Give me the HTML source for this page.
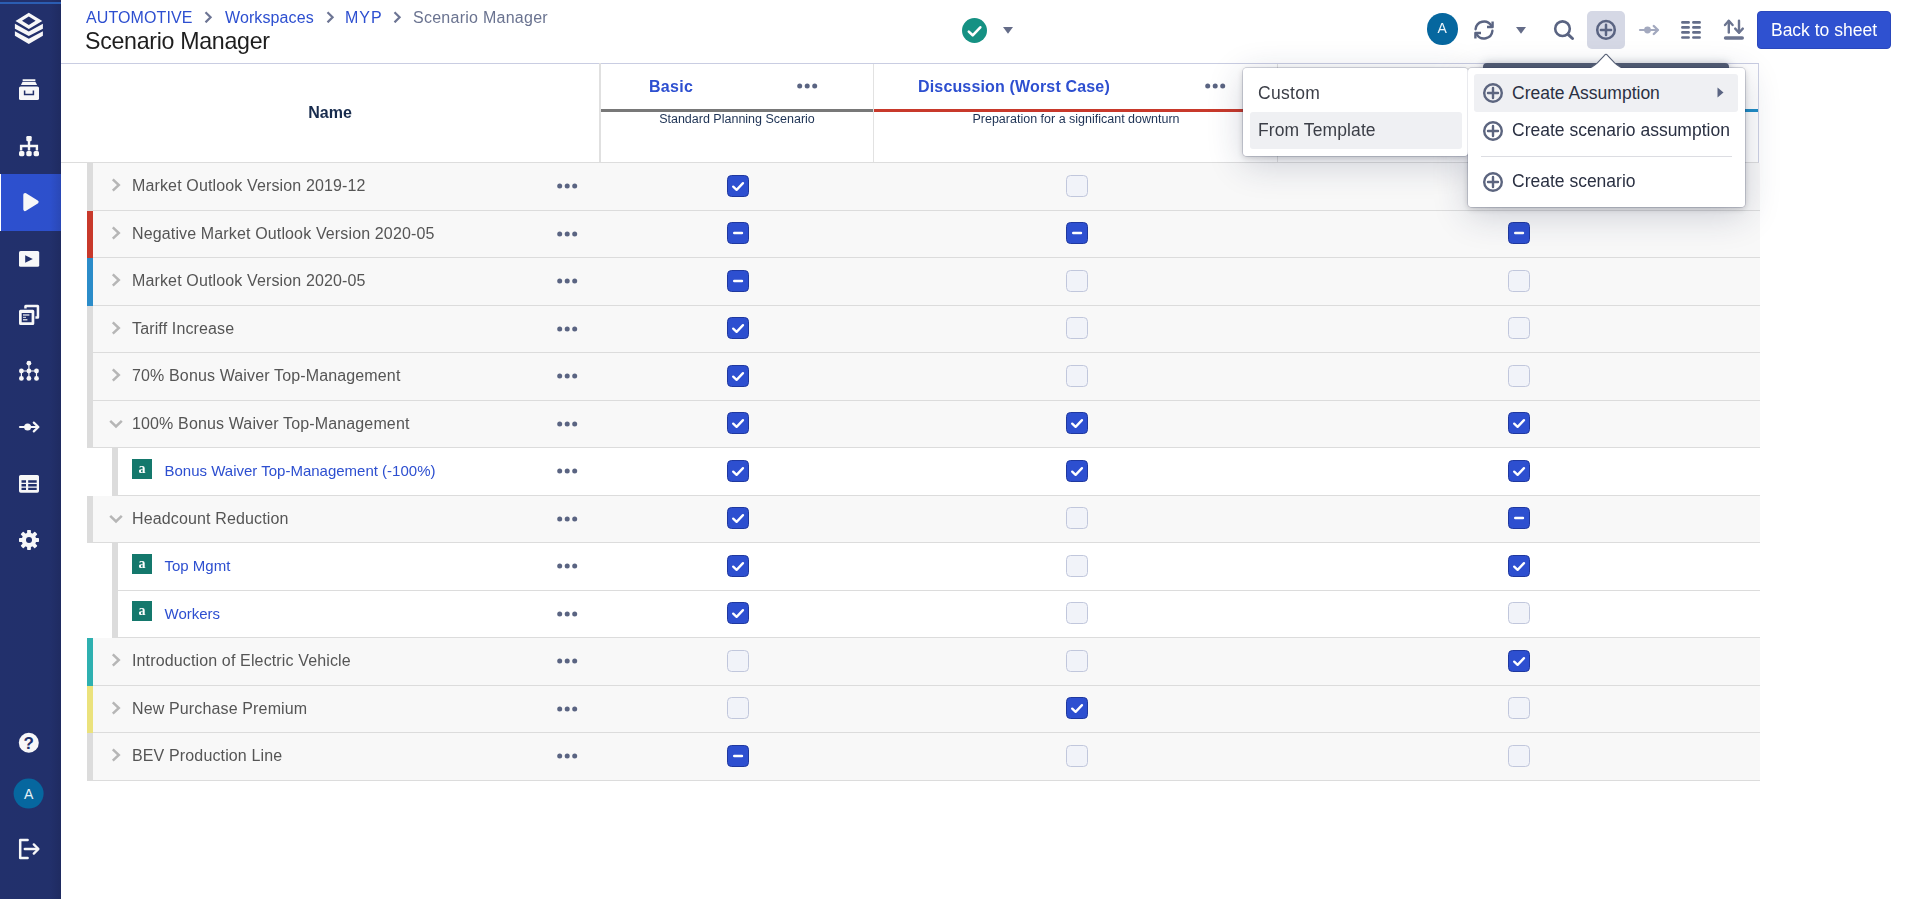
<!DOCTYPE html>
<html lang="en"><head><meta charset="utf-8"><title>Scenario Manager</title>
<style>
*{box-sizing:border-box;margin:0;padding:0}
html,body{width:1918px;height:899px;overflow:hidden;background:#fff}
body{font-family:"Liberation Sans",Arial,sans-serif;color:#333;position:relative}
.abs{position:absolute}
/* sidebar */
#side{position:absolute;left:0;top:0;width:61px;height:899px;background:linear-gradient(90deg,#22306c 0%,#22306b 82%,#1f2b61 100%)}
#side .topline{position:absolute;left:0;top:2px;width:61px;height:2px;background:#2b5db2}
#side .active{position:absolute;left:0;top:174px;width:61px;height:57px;background:linear-gradient(90deg,#2d50cf 0%,#2d50cc 82%,#2a48b6 100%);border-left:1px solid #fff}
#side svg{position:absolute;overflow:visible}
/* header */
#hdr{position:absolute;left:61px;top:0;width:1857px;height:64px;background:#fff}
#hline{position:absolute;left:61px;top:63px;width:1698px;height:1px;background:#c9cde2}
.bc{position:absolute;top:9px;font-size:16px;line-height:18px;white-space:nowrap;color:#2d4fd0}
.ttl{position:absolute;left:84.500px;top:27.500px;font-size:23.200px;letter-spacing:-0.300px;line-height:26px;color:#1e1e1e;white-space:nowrap}
/* table header */
#thead{position:absolute;left:61px;top:64px;width:1698px;height:99px;background:#fff;border-right:1px solid #cdd1e4;border-bottom:1px solid #ddd}
.vsep{position:absolute;top:64px;width:1px;height:98px;background:#e2e2e2}
.th-name{position:absolute;left:61px;width:538px;top:104px;text-align:center;font-weight:bold;font-size:16px;line-height:18px;color:#172b4d}
.sc-t{position:absolute;top:78px;font-weight:bold;font-size:16px;line-height:18px;color:#2d4fd0;white-space:nowrap}
.sc-s{position:absolute;top:112px;font-size:12.500px;line-height:14px;color:#1d3254;text-align:center;white-space:nowrap}
.ul{position:absolute;top:109px;height:3px}
svg.dots{fill:#5a6482}
/* rows */
.row{position:absolute;left:0;width:1760px}
.row .bar{position:absolute;top:0;bottom:0;width:6px}
.row .bg{position:absolute;top:0;bottom:0;right:0;border-bottom:1px solid #dcdcdc}
.gs,.bc,.ttl,.th-name,.sc-t,.sc-s,.mi.sub,.btn,.av{will-change:transform}
.row.par .bar{left:87px}
.row.par .bg{left:93px;background:#f8f8f8}
.row.kid .bar{left:112px;background:#dcdcdc}
.row.kid .bg{left:118px;background:#fff}
.row .chv{position:absolute;left:111px;top:15px;width:10px;height:14px}
.row .chx{position:absolute;left:109px;top:17.500px;width:14px;height:10px}
.row .nm{position:absolute;left:132px;top:13px;font-size:16px;line-height:20px;color:#555;white-space:nowrap;letter-spacing:.14px}
.row .ai{position:absolute;left:132px;top:11px;width:20px;height:20px;background:#14786c;color:#fff;font-family:"Liberation Serif",serif;font-weight:bold;font-size:14px;line-height:19px;text-align:center}
.row .lk{position:absolute;left:164.500px;top:12.500px;font-size:15px;line-height:20px;color:#2d4fd0;white-space:nowrap}
.row .dots{position:absolute;left:556.800px;top:20px;width:21px;height:6px}
.cb{position:absolute;top:12px;width:22px;height:22px;border-radius:4.500px;background:#f1f3f9;border:1px solid #c1c7dc}
.cb.on{background:#2d4fd0;border-color:#1f389f}
.cb svg{position:absolute;left:-1px;top:-1px;width:22px;height:22px}
/* menus */
.menu{position:absolute;background:#fff;border-radius:4px;box-shadow:0 0 0 1px rgba(40,50,90,.08),0 2px 6px rgba(0,0,0,.18),0 8px 36px rgba(30,40,80,.20)}
.menub{position:absolute;background:#fff;border-radius:4px;box-shadow:0 0 0 1px rgba(40,50,90,.10)}
.mi{position:absolute;font-size:17.5px;line-height:22px;color:#2a3042;white-space:nowrap}
.hl{position:absolute;background:#eff0f3;border-radius:3px}
</style></head><body>
<div id="hdr"></div>
<div id="hline"></div>
<a class="bc" style="left:86px;letter-spacing:.1px">AUTOMOTIVE</a><svg class="abs" style="left:204.3px;top:10.800px" width="9" height="12.600" viewBox="0 0 9 12.600"><path d="M1.500 1.200l5.100 5.100-5.100 5.100" fill="none" stroke="#6d7594" stroke-width="2.200"/></svg><a class="bc" style="left:225.300px;letter-spacing:.1px">Workspaces</a><svg class="abs" style="left:326px;top:10.800px" width="9" height="12.600" viewBox="0 0 9 12.600"><path d="M1.500 1.200l5.100 5.100-5.100 5.100" fill="none" stroke="#6d7594" stroke-width="2.200"/></svg><a class="bc" style="left:345px;letter-spacing:1px">MYP</a><svg class="abs" style="left:392.8px;top:10.800px" width="9" height="12.600" viewBox="0 0 9 12.600"><path d="M1.500 1.200l5.100 5.100-5.100 5.100" fill="none" stroke="#6d7594" stroke-width="2.200"/></svg><span class="bc" style="left:412.700px;letter-spacing:.26px;color:#6a7390">Scenario Manager</span>
<div class="ttl">Scenario Manager</div>

<!-- status -->
<svg class="abs" style="left:962px;top:17.500px" width="25" height="25" viewBox="0 0 25 25"><circle cx="12.5" cy="12.5" r="12.5" fill="#159183"/><path d="M6.800 13.600l3.900 3.700 7.600-8" fill="none" stroke="#fff" stroke-width="2.600" stroke-linecap="round" stroke-linejoin="round"/></svg>
<svg class="abs" style="left:1003px;top:27px" width="10" height="7" viewBox="0 0 10 7"><path d="M0 0h10L5 6.800z" fill="#646c88"/></svg>

<!-- toolbar -->
<div class="abs av" style="left:1427px;top:13px;width:30.500px;height:31.500px;border-radius:50%;background:#06679f;color:#eef5fa;font-size:14px;line-height:31.500px;text-align:center">A</div>
<svg class="abs" style="left:1474px;top:20px" width="20" height="20" viewBox="0 0 20 20" fill="none" stroke="#5a6482" stroke-width="2.400" stroke-linecap="round" stroke-linejoin="round"><path d="M1.600 9.200A8.500 8.500 0 0 1 17.300 5.600"/><path d="M18.600 1.400v5.600h-5.600" stroke-linecap="butt"/><path d="M18.400 10.800A8.500 8.500 0 0 1 2.700 14.400"/><path d="M1.400 18.600v-5.600h5.600" stroke-linecap="butt"/></svg>
<svg class="abs" style="left:1516px;top:27px" width="10" height="7" viewBox="0 0 10 7"><path d="M0 0h10L5 6.800z" fill="#646c88"/></svg>
<svg class="abs" style="left:1553px;top:19px" width="22" height="22" viewBox="0 0 22 22" fill="none" stroke="#5a6482" stroke-linecap="round"><circle cx="9.500" cy="9.700" r="7.300" stroke-width="2.600"/><path d="M15 15.300l4.500 4.200" stroke-width="3"/></svg>
<div class="abs" style="left:1587px;top:11px;width:38px;height:38px;border-radius:5px;background:#d5d8e5"></div>
<svg class="abs" style="left:1595px;top:19px" width="22" height="22" viewBox="0 0 22 22" fill="none" stroke="#5a6482" stroke-width="2.500"><circle cx="11" cy="10.900" r="8.800"/><path d="M11 5.800v10.200M5.900 10.900h10.200" stroke-linecap="round"/></svg>
<svg class="abs" style="left:1638px;top:24px" width="22" height="12" viewBox="0 0 22 12" fill="none" stroke="#a3a9bf" stroke-width="2.200" stroke-linecap="round" stroke-linejoin="round"><path d="M2 6h17.500"/><path d="M15.800 2L19.900 6l-4.100 4" stroke-width="2.400"/><circle cx="9.500" cy="6" r="3.400" fill="#a3a9bf" stroke="none"/></svg>
<svg class="abs" style="left:1680px;top:20px" width="22" height="20" viewBox="0 0 22 20" fill="none" stroke="#646e8a" stroke-width="2.700" stroke-linecap="round"><path d="M2.400 2.400h6.200M2.400 7.400h6.200M2.400 12.400h6.200M2.400 17.500h6.200M13.400 2.400h6.200M13.400 7.400h6.200M13.400 12.400h6.200M13.400 17.500h6.200"/></svg>
<svg class="abs" style="left:1722px;top:18px" width="24" height="24" viewBox="0 0 24 24" fill="none" stroke="#6b7490" stroke-width="2.400" stroke-linecap="round" stroke-linejoin="round"><path d="M6.800 14.600V3"/><path d="M3 7l3.800-4.200L10.600 7"/><path d="M17 2.800v11.800"/><path d="M13.200 10.600l3.800 4.200 3.800-4.200"/><path d="M3.600 20h16.600" stroke-width="3.600"/></svg>
<div class="abs btn" style="left:1757px;top:11px;width:134px;height:38px;border-radius:4px;background:#2f51d0;border:1px solid #2a47bd;color:#fff;font-size:17.5px;line-height:36px;text-align:center;white-space:nowrap">Back to sheet</div>

<!-- table header -->
<div id="thead"></div>
<div class="vsep" style="left:599px;width:2px;top:63px;height:99px;background:#e0e0e0"></div>
<div class="vsep" style="left:873px"></div>
<div class="vsep" style="left:1277px"></div>
<div class="th-name">Name</div>
<div class="sc-t" style="left:648.500px;letter-spacing:.3px">Basic</div>
<svg class="abs dots" style="left:796.800px;top:83px" width="21" height="6" viewBox="0 0 21 6"><circle cx="2.700" cy="3" r="2.500"/><circle cx="10.200" cy="3" r="2.500"/><circle cx="17.700" cy="3" r="2.500"/></svg>
<div class="ul" style="left:601px;width:272px;background:#787878"></div>
<div class="sc-s" style="left:600px;width:274px">Standard Planning Scenario</div>
<div class="sc-t" style="left:918px;letter-spacing:.16px">Discussion (Worst Case)</div>
<svg class="abs dots" style="left:1204.800px;top:83px" width="21" height="6" viewBox="0 0 21 6"><circle cx="2.700" cy="3" r="2.500"/><circle cx="10.200" cy="3" r="2.500"/><circle cx="17.700" cy="3" r="2.500"/></svg>
<div class="ul" style="left:874px;width:403px;background:#c8392b"></div>
<div class="sc-s" style="left:874px;width:404px">Preparation for a significant downturn</div>
<div class="sc-t" style="left:1330px">Management Case</div>
<div class="ul" style="left:1278px;width:480px;background:#1f8dc6"></div>
<div class="sc-s" style="left:1278px;width:482px">Scenario for management review</div>

<!-- rows -->
<div class="gs" style="position:absolute;left:0;top:0;width:1760px;height:0">
<div class="row par" style="top:163px;height:48px"><i class="bar" style="background:#dcdcdc"></i><i class="bg"></i><svg class="chv" viewBox="0 0 10 14"><path d="M1.800 1.400l6 5.600-6 5.600" fill="none" stroke="#b6b6b6" stroke-width="2.500"/></svg><span class="nm">Market Outlook Version 2019-12</span><svg class="dots" viewBox="0 0 21 6"><circle cx="2.7" cy="3" r="2.5"/><circle cx="10.2" cy="3" r="2.5"/><circle cx="17.7" cy="3" r="2.5"/></svg><span class="cb on" style="top:12px;left:727px"><svg viewBox="0 0 22 22"><path d="M6.200 11.600l3.400 3.300 6.400-6.800" fill="none" stroke="#fff" stroke-width="2.300" stroke-linecap="round" stroke-linejoin="round"/></svg></span><span class="cb" style="top:12px;left:1066px"></span><span class="cb" style="top:12px;left:1508px"></span></div>
<div class="row par" style="top:211px;height:47px"><i class="bar" style="background:#c8392b"></i><i class="bg"></i><svg class="chv" viewBox="0 0 10 14"><path d="M1.800 1.400l6 5.600-6 5.600" fill="none" stroke="#b6b6b6" stroke-width="2.500"/></svg><span class="nm">Negative Market Outlook Version 2020-05</span><svg class="dots" viewBox="0 0 21 6"><circle cx="2.7" cy="3" r="2.5"/><circle cx="10.2" cy="3" r="2.5"/><circle cx="17.7" cy="3" r="2.5"/></svg><span class="cb on" style="top:11px;left:727px"><svg viewBox="0 0 22 22"><path d="M7.200 11h7.800" fill="none" stroke="#fff" stroke-width="2.400" stroke-linecap="round"/></svg></span><span class="cb on" style="top:11px;left:1066px"><svg viewBox="0 0 22 22"><path d="M7.200 11h7.800" fill="none" stroke="#fff" stroke-width="2.400" stroke-linecap="round"/></svg></span><span class="cb on" style="top:11px;left:1508px"><svg viewBox="0 0 22 22"><path d="M7.200 11h7.800" fill="none" stroke="#fff" stroke-width="2.400" stroke-linecap="round"/></svg></span></div>
<div class="row par" style="top:258px;height:48px"><i class="bar" style="background:#2b8cc9"></i><i class="bg"></i><svg class="chv" viewBox="0 0 10 14"><path d="M1.800 1.400l6 5.600-6 5.600" fill="none" stroke="#b6b6b6" stroke-width="2.500"/></svg><span class="nm">Market Outlook Version 2020-05</span><svg class="dots" viewBox="0 0 21 6"><circle cx="2.7" cy="3" r="2.5"/><circle cx="10.2" cy="3" r="2.5"/><circle cx="17.7" cy="3" r="2.5"/></svg><span class="cb on" style="top:12px;left:727px"><svg viewBox="0 0 22 22"><path d="M7.200 11h7.800" fill="none" stroke="#fff" stroke-width="2.400" stroke-linecap="round"/></svg></span><span class="cb" style="top:12px;left:1066px"></span><span class="cb" style="top:12px;left:1508px"></span></div>
<div class="row par" style="top:306px;height:47px"><i class="bar" style="background:#dcdcdc"></i><i class="bg"></i><svg class="chv" viewBox="0 0 10 14"><path d="M1.800 1.400l6 5.600-6 5.600" fill="none" stroke="#b6b6b6" stroke-width="2.500"/></svg><span class="nm">Tariff Increase</span><svg class="dots" viewBox="0 0 21 6"><circle cx="2.7" cy="3" r="2.5"/><circle cx="10.2" cy="3" r="2.5"/><circle cx="17.7" cy="3" r="2.5"/></svg><span class="cb on" style="top:11px;left:727px"><svg viewBox="0 0 22 22"><path d="M6.200 11.600l3.400 3.300 6.400-6.800" fill="none" stroke="#fff" stroke-width="2.300" stroke-linecap="round" stroke-linejoin="round"/></svg></span><span class="cb" style="top:11px;left:1066px"></span><span class="cb" style="top:11px;left:1508px"></span></div>
<div class="row par" style="top:353px;height:48px"><i class="bar" style="background:#dcdcdc"></i><i class="bg"></i><svg class="chv" viewBox="0 0 10 14"><path d="M1.800 1.400l6 5.600-6 5.600" fill="none" stroke="#b6b6b6" stroke-width="2.500"/></svg><span class="nm">70% Bonus Waiver Top-Management</span><svg class="dots" viewBox="0 0 21 6"><circle cx="2.7" cy="3" r="2.5"/><circle cx="10.2" cy="3" r="2.5"/><circle cx="17.7" cy="3" r="2.5"/></svg><span class="cb on" style="top:12px;left:727px"><svg viewBox="0 0 22 22"><path d="M6.200 11.600l3.400 3.300 6.400-6.800" fill="none" stroke="#fff" stroke-width="2.300" stroke-linecap="round" stroke-linejoin="round"/></svg></span><span class="cb" style="top:12px;left:1066px"></span><span class="cb" style="top:12px;left:1508px"></span></div>
<div class="row par" style="top:401px;height:47px"><i class="bar" style="background:#dcdcdc"></i><i class="bg"></i><svg class="chx" viewBox="0 0 14 10"><path d="M1.200 1.800l5.800 5.600L12.800 1.800" fill="none" stroke="#b6b6b6" stroke-width="2.500"/></svg><span class="nm">100% Bonus Waiver Top-Management</span><svg class="dots" viewBox="0 0 21 6"><circle cx="2.7" cy="3" r="2.5"/><circle cx="10.2" cy="3" r="2.5"/><circle cx="17.7" cy="3" r="2.5"/></svg><span class="cb on" style="top:11px;left:727px"><svg viewBox="0 0 22 22"><path d="M6.200 11.600l3.400 3.300 6.400-6.800" fill="none" stroke="#fff" stroke-width="2.300" stroke-linecap="round" stroke-linejoin="round"/></svg></span><span class="cb on" style="top:11px;left:1066px"><svg viewBox="0 0 22 22"><path d="M6.200 11.600l3.400 3.300 6.400-6.800" fill="none" stroke="#fff" stroke-width="2.300" stroke-linecap="round" stroke-linejoin="round"/></svg></span><span class="cb on" style="top:11px;left:1508px"><svg viewBox="0 0 22 22"><path d="M6.200 11.600l3.400 3.300 6.400-6.800" fill="none" stroke="#fff" stroke-width="2.300" stroke-linecap="round" stroke-linejoin="round"/></svg></span></div>
<div class="row kid" style="top:448px;height:48px"><i class="bar"></i><i class="bg"></i><span class="ai">a</span><a class="lk">Bonus Waiver Top-Management (-100%)</a><svg class="dots" viewBox="0 0 21 6"><circle cx="2.7" cy="3" r="2.5"/><circle cx="10.2" cy="3" r="2.5"/><circle cx="17.7" cy="3" r="2.5"/></svg><span class="cb on" style="top:12px;left:727px"><svg viewBox="0 0 22 22"><path d="M6.200 11.600l3.400 3.300 6.400-6.800" fill="none" stroke="#fff" stroke-width="2.300" stroke-linecap="round" stroke-linejoin="round"/></svg></span><span class="cb on" style="top:12px;left:1066px"><svg viewBox="0 0 22 22"><path d="M6.200 11.600l3.400 3.300 6.400-6.800" fill="none" stroke="#fff" stroke-width="2.300" stroke-linecap="round" stroke-linejoin="round"/></svg></span><span class="cb on" style="top:12px;left:1508px"><svg viewBox="0 0 22 22"><path d="M6.200 11.600l3.400 3.300 6.400-6.800" fill="none" stroke="#fff" stroke-width="2.300" stroke-linecap="round" stroke-linejoin="round"/></svg></span></div>
<div class="row par" style="top:496px;height:47px"><i class="bar" style="background:#dcdcdc"></i><i class="bg"></i><svg class="chx" viewBox="0 0 14 10"><path d="M1.200 1.800l5.800 5.600L12.800 1.800" fill="none" stroke="#b6b6b6" stroke-width="2.500"/></svg><span class="nm">Headcount Reduction</span><svg class="dots" viewBox="0 0 21 6"><circle cx="2.7" cy="3" r="2.5"/><circle cx="10.2" cy="3" r="2.5"/><circle cx="17.7" cy="3" r="2.5"/></svg><span class="cb on" style="top:11px;left:727px"><svg viewBox="0 0 22 22"><path d="M6.200 11.600l3.400 3.300 6.400-6.800" fill="none" stroke="#fff" stroke-width="2.300" stroke-linecap="round" stroke-linejoin="round"/></svg></span><span class="cb" style="top:11px;left:1066px"></span><span class="cb on" style="top:11px;left:1508px"><svg viewBox="0 0 22 22"><path d="M7.200 11h7.800" fill="none" stroke="#fff" stroke-width="2.400" stroke-linecap="round"/></svg></span></div>
<div class="row kid" style="top:543px;height:48px"><i class="bar"></i><i class="bg"></i><span class="ai">a</span><a class="lk">Top Mgmt</a><svg class="dots" viewBox="0 0 21 6"><circle cx="2.7" cy="3" r="2.5"/><circle cx="10.2" cy="3" r="2.5"/><circle cx="17.7" cy="3" r="2.5"/></svg><span class="cb on" style="top:12px;left:727px"><svg viewBox="0 0 22 22"><path d="M6.200 11.600l3.400 3.300 6.400-6.800" fill="none" stroke="#fff" stroke-width="2.300" stroke-linecap="round" stroke-linejoin="round"/></svg></span><span class="cb" style="top:12px;left:1066px"></span><span class="cb on" style="top:12px;left:1508px"><svg viewBox="0 0 22 22"><path d="M6.200 11.600l3.400 3.300 6.400-6.800" fill="none" stroke="#fff" stroke-width="2.300" stroke-linecap="round" stroke-linejoin="round"/></svg></span></div>
<div class="row kid" style="top:591px;height:47px"><i class="bar"></i><i class="bg"></i><span class="ai" style="top:10px">a</span><a class="lk">Workers</a><svg class="dots" viewBox="0 0 21 6"><circle cx="2.7" cy="3" r="2.5"/><circle cx="10.2" cy="3" r="2.5"/><circle cx="17.7" cy="3" r="2.5"/></svg><span class="cb on" style="top:11px;left:727px"><svg viewBox="0 0 22 22"><path d="M6.200 11.600l3.400 3.300 6.400-6.800" fill="none" stroke="#fff" stroke-width="2.300" stroke-linecap="round" stroke-linejoin="round"/></svg></span><span class="cb" style="top:11px;left:1066px"></span><span class="cb" style="top:11px;left:1508px"></span></div>
<div class="row par" style="top:638px;height:48px"><i class="bar" style="background:#2eb0b0"></i><i class="bg"></i><svg class="chv" viewBox="0 0 10 14"><path d="M1.800 1.400l6 5.600-6 5.600" fill="none" stroke="#b6b6b6" stroke-width="2.500"/></svg><span class="nm">Introduction of Electric Vehicle</span><svg class="dots" viewBox="0 0 21 6"><circle cx="2.7" cy="3" r="2.5"/><circle cx="10.2" cy="3" r="2.5"/><circle cx="17.7" cy="3" r="2.5"/></svg><span class="cb" style="top:12px;left:727px"></span><span class="cb" style="top:12px;left:1066px"></span><span class="cb on" style="top:12px;left:1508px"><svg viewBox="0 0 22 22"><path d="M6.200 11.600l3.400 3.300 6.400-6.800" fill="none" stroke="#fff" stroke-width="2.300" stroke-linecap="round" stroke-linejoin="round"/></svg></span></div>
<div class="row par" style="top:686px;height:47px"><i class="bar" style="background:#ebe27c"></i><i class="bg"></i><svg class="chv" viewBox="0 0 10 14"><path d="M1.800 1.400l6 5.600-6 5.600" fill="none" stroke="#b6b6b6" stroke-width="2.500"/></svg><span class="nm">New Purchase Premium</span><svg class="dots" viewBox="0 0 21 6"><circle cx="2.7" cy="3" r="2.5"/><circle cx="10.2" cy="3" r="2.5"/><circle cx="17.7" cy="3" r="2.5"/></svg><span class="cb" style="top:11px;left:727px"></span><span class="cb on" style="top:11px;left:1066px"><svg viewBox="0 0 22 22"><path d="M6.200 11.600l3.400 3.300 6.400-6.800" fill="none" stroke="#fff" stroke-width="2.300" stroke-linecap="round" stroke-linejoin="round"/></svg></span><span class="cb" style="top:11px;left:1508px"></span></div>
<div class="row par" style="top:733px;height:48px"><i class="bar" style="background:#dcdcdc"></i><i class="bg"></i><svg class="chv" viewBox="0 0 10 14"><path d="M1.800 1.400l6 5.600-6 5.600" fill="none" stroke="#b6b6b6" stroke-width="2.500"/></svg><span class="nm">BEV Production Line</span><svg class="dots" viewBox="0 0 21 6"><circle cx="2.7" cy="3" r="2.5"/><circle cx="10.2" cy="3" r="2.5"/><circle cx="17.7" cy="3" r="2.5"/></svg><span class="cb on" style="top:12px;left:727px"><svg viewBox="0 0 22 22"><path d="M7.200 11h7.800" fill="none" stroke="#fff" stroke-width="2.400" stroke-linecap="round"/></svg></span><span class="cb" style="top:12px;left:1066px"></span><span class="cb" style="top:12px;left:1508px"></span></div>
</div>

<!-- tooltip (mostly hidden behind menu) -->
<div class="abs" style="left:1483px;top:63px;width:246px;height:30px;border-radius:4px;background:#525c73;box-shadow:0 0 9px rgba(30,40,70,.28);color:#fff;font-size:14px;line-height:30px;text-align:center">Create</div>

<!-- menu shadows -->
<div class="menu" style="left:1243px;top:68px;width:225px;height:88px"></div>
<div class="menu" style="left:1468px;top:68px;width:277px;height:139px"></div>
<!-- submenu -->
<div class="menub" style="left:1243px;top:68px;width:225px;height:88px"></div>
<div class="hl" style="left:1250px;top:112px;width:212px;height:37px"></div>
<div class="mi sub" style="left:1257.500px;top:82px;color:#3b3e47;letter-spacing:.3px">Custom</div>
<div class="mi sub" style="left:1257.700px;top:119px;color:#3b3e47;letter-spacing:.1px">From Template</div>

<!-- main menu -->
<div class="menub" style="left:1468px;top:68px;width:277px;height:139px"></div>
<svg class="abs" style="left:1588px;top:52.200px" width="36" height="17" viewBox="0 0 36 17"><path d="M3.400 15.400Q7.400 12.700 9.400 10.800L16.500 3.300Q18 1.300 19.500 3.300L26.600 10.800Q28.600 12.700 32.600 15.400V17H3.400z" fill="#fff"/><path d="M3.400 15.400Q7.400 12.700 9.400 10.800L16.500 3.300Q18 1.300 19.500 3.300L26.600 10.800Q28.600 12.700 32.600 15.400" fill="none" stroke="#525c73" stroke-width="1.100"/></svg>
<div class="hl" style="left:1474px;top:74px;width:264px;height:37.500px"></div>
<div class="mi" style="left:1512px;top:82px">Create Assumption</div>
<svg class="abs" style="left:1716.500px;top:87px" width="7" height="11" viewBox="0 0 7 11"><path d="M0.500 0.500L6.500 5.500 0.500 10.500z" fill="#5a6482"/></svg>
<div class="mi" style="left:1512px;top:119px">Create scenario assumption</div>
<div class="abs" style="left:1481px;top:156px;width:251px;height:1px;background:#dcdde2"></div>
<div class="mi" style="left:1512px;top:170px">Create scenario</div>
<svg class="abs pl" style="left:1482px;top:82px" width="22" height="22" viewBox="0 0 22 22" fill="none" stroke="#5c657f" stroke-width="2.400"><circle cx="11" cy="11" r="8.800"/><path d="M11 6v10M6 11h10" stroke-linecap="round"/></svg>
<svg class="abs pl" style="left:1482px;top:120px" width="22" height="22" viewBox="0 0 22 22" fill="none" stroke="#5c657f" stroke-width="2.400"><circle cx="11" cy="11" r="8.800"/><path d="M11 6v10M6 11h10" stroke-linecap="round"/></svg>
<svg class="abs pl" style="left:1482px;top:171px" width="22" height="22" viewBox="0 0 22 22" fill="none" stroke="#5c657f" stroke-width="2.400"><circle cx="11" cy="11" r="8.800"/><path d="M11 6v10M6 11h10" stroke-linecap="round"/></svg>

<!-- sidebar -->
<div id="side">
<div class="topline"></div>
<div class="active"></div>
<svg style="left:0;top:0" width="61" height="899" viewBox="0 0 61 899">
<g fill="#f7f7f8">
<!-- logo -->
<path fill-rule="evenodd" d="M28.800 12.800L42.300 21 28.800 29 15.500 21zM28.800 16.600L22 20.800 28.800 25 35.600 20.800z"/>
<path d="M14.900 23.700L28.800 31.500 42.900 23.700V28.800L28.800 36 14.900 28.800z"/>
<path d="M14.900 31.300L28.800 38.800 42.900 31.300V35.800L28.800 44 14.900 35.800z"/>
<!-- archive -->
<rect x="22.600" y="79.300" width="12.800" height="1.600" rx=".3"/>
<path d="M22.600 81.700h12.800l1.700 3.300H20.900z"/>
<rect x="19" y="86.400" width="20" height="13.700" rx="1.600"/>
<!-- org tree -->
<rect x="26.300" y="136" width="5.400" height="5.200" rx="1.200"/>
<rect x="19" y="151" width="5.400" height="5.200" rx="1.600"/>
<rect x="26.300" y="151" width="5.400" height="5.200" rx="1.600"/>
<rect x="33.600" y="151" width="5.400" height="5.200" rx="1.600"/>
<path d="M27.800 140h2.400v4.800h7.900v5.800h-2.400v-3.400H30.200v3.400h-2.400v-3.400h-5.500v3.400h-2.400v-5.800H27.800z"/>
<!-- play -->
<path d="M25.100 194.700L36.800 202 25.100 209.300z" stroke="#f7f7f8" stroke-width="3.600" stroke-linejoin="round"/>
<!-- video -->
<rect x="19" y="251" width="20.200" height="15.800" rx="1.600"/>
<!-- copy -->
<path d="M19 311.200q0-1.500 1.500-1.500h12.300q1.500 0 1.500 1.500v12.300q0 1.500-1.500 1.500H20.500q-1.500 0-1.500-1.500zM21.700 313.100v9.200h9.900V313.100z" fill-rule="evenodd"/>
<path d="M24.200 308.600V306.200q0-1.500 1.500-1.500H37.700q1.500 0 1.500 1.500V317.300q0 1.500-1.500 1.500H35.400V316.300H36.700V307.200H26.700V308.600z"/>
<rect x="23" y="314.400" width="6.400" height="1.200"/><rect x="23" y="316.800" width="3" height="1.200" opacity=".75"/><rect x="23" y="319.200" width="4.400" height="1.200"/>
<!-- network -->
<circle cx="28.900" cy="363.200" r="2.400"/><circle cx="21.400" cy="371" r="2.400"/><circle cx="28.900" cy="371" r="2.400"/><circle cx="36.500" cy="371" r="2.400"/><circle cx="21.400" cy="378.400" r="2.400"/><circle cx="28.900" cy="378.400" r="2.400"/><circle cx="36.500" cy="378.400" r="2.400"/>
<path d="M28.300 363h1.200v15h-1.200zM21 370.400h15.600v1.200H21zM20.800 371h1.200v7.400h-1.200zM35.900 371h1.200v7.400h-1.200z"/>
<!-- arrow -->
<circle cx="27.600" cy="427" r="3.500"/>
<!-- table -->
<path fill-rule="evenodd" d="M19 476.600q0-1.700 1.700-1.700h16.600q1.700 0 1.700 1.700v14.400q0 1.700-1.700 1.700H20.700q-1.700 0-1.700-1.700zM21.500 480.3v2.400h4.500v-2.400zM28.200 480.3v2.400h8.500v-2.400zM21.500 484.0v2.400h4.500v-2.400zM28.200 484.0v2.400h8.500v-2.400zM21.500 487.7v2.400h4.500v-2.400zM28.200 487.7v2.400h8.500v-2.400z"/>
<!-- help -->
<circle cx="28.800" cy="742.800" r="10"/>
</g>
<!-- archive handle -->
<path d="M24.600 90.400v4h8.800v-4" fill="none" stroke="#22306b" stroke-width="1.500"/>
<!-- video tri -->
<path d="M25.200 255.200L32.800 259 25.200 262.800z" fill="#22306b"/>
<!-- arrow lines -->
<g fill="none" stroke="#f7f7f8" stroke-width="2.200" stroke-linecap="round" stroke-linejoin="round">
<path d="M20 427h18"/><path d="M33.800 422.600L38.400 427l-4.600 4.400"/>
<!-- logout -->
<path d="M27.600 840H20.200v18h7.400" stroke-width="2.500" stroke-linejoin="round"/><path d="M24.800 849h13" stroke-width="2.400"/><path d="M33.800 844.400L38.400 849l-4.600 4.600" stroke-width="2.400"/>
</g>
<!-- gear -->
<g transform="translate(29 540)">
<g fill="#f7f7f8"><circle r="7.300"/><rect x="-1.900" y="-10" width="3.800" height="20" rx=".7" transform="rotate(0)"/><rect x="-1.900" y="-10" width="3.800" height="20" rx=".7" transform="rotate(45)"/><rect x="-1.900" y="-10" width="3.800" height="20" rx=".7" transform="rotate(90)"/><rect x="-1.900" y="-10" width="3.800" height="20" rx=".7" transform="rotate(135)"/></g><circle r="3" fill="#22306b"/></g>
<!-- avatar -->
<circle cx="28.600" cy="793.600" r="15" fill="#06679f"/>
<text x="28.600" y="798.600" font-size="14" fill="#e8f1f7" text-anchor="middle" font-family="Liberation Sans, Arial, sans-serif">A</text>
<text x="28.800" y="748.800" font-size="17" font-weight="bold" fill="#22306b" text-anchor="middle" font-family="Liberation Sans, Arial, sans-serif">?</text>
</svg>

</div>
</body></html>
